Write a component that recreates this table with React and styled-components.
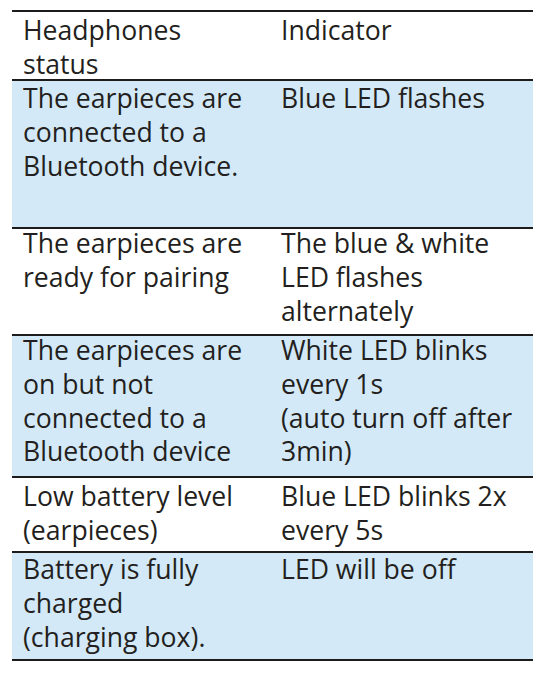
import styled, { createGlobalStyle } from "styled-components";

const GlobalStyle = createGlobalStyle`
  body {
    margin: 0;
    background: #ffffff;
  }
`;

const Table = styled.div`
  margin: 10px 0 0 12px;
  width: 521px;
  border-top: 2px solid #1d1b1c;
  font-family: "Open Sans", "Liberation Sans", sans-serif;
  font-size: 26.6px;
  line-height: 33.8px;
  color: #231f20;
`;

const Row = styled.div`
  display: grid;
  grid-template-columns: 258px 1fr;
  align-items: start;
  box-sizing: border-box;
  height: ${props => props.h}px;
  background: ${props => (props.shaded ? "#d4e9f7" : "#ffffff")};
  border-bottom: 2px solid #1d1b1c;
`;

const Cell = styled.div`
  padding: 0 0 0 11px;
  margin-top: ${props => props.offset}px;
  white-space: nowrap;
`;

const Line = styled.div`
  height: 33.8px;
`;

const rows = [
  { h: 69, offset: 2, shaded: false, a: ["Headphones", "status"], b: ["Indicator"] },
  { h: 148, offset: 1, shaded: true, a: ["The earpieces are", "connected to a", "Bluetooth device."], b: ["Blue LED flashes"] },
  { h: 107, offset: -2, shaded: false, a: ["The earpieces are", "ready for pairing"], b: ["The blue & white", "LED flashes", "alternately"] },
  { h: 142, offset: -2, shaded: true, a: ["The earpieces are", "on but not", "connected to a", "Bluetooth device"], b: ["White LED blinks", "every 1s", "(auto turn off after", "3min)"] },
  { h: 75, offset: 2, shaded: false, a: ["Low battery level", "(earpieces)"], b: ["Blue LED blinks 2x", "every 5s"] },
  { h: 108, offset: 0, shaded: true, a: ["Battery is fully", "charged", "(charging box)."], b: ["LED will be off"] },
];

const Lines = ({ items, offset }) => (
  <Cell offset={offset}>
    {items.map((t, i) => (
      <Line key={i}>{t}</Line>
    ))}
  </Cell>
);

export default function App() {
  return (
    <>
      <GlobalStyle />
      <Table>
        {rows.map((r, i) => (
          <Row key={i} h={r.h} shaded={r.shaded}>
            <Lines items={r.a} offset={r.offset} />
            <Lines items={r.b} offset={r.offset} />
          </Row>
        ))}
      </Table>
    </>
  );
}
